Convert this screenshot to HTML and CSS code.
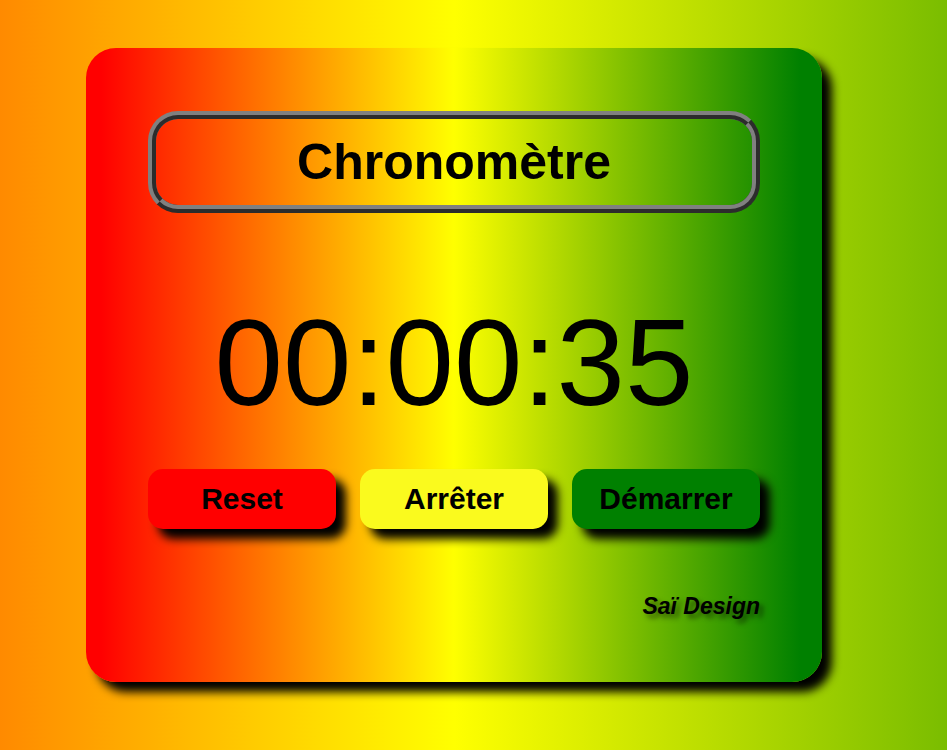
FILE: index.html
```html
<!DOCTYPE html>
<html lang="fr">
<head>
<meta charset="utf-8">
<title>Chronomètre</title>
<link rel="stylesheet" href="styles.css">
</head>
<body>
<main class="card">
  <h1 class="title">Chronomètre</h1>
  <div class="timer">00:00:35</div>
  <div class="buttons">
    <button class="btn btn-reset">Reset</button>
    <button class="btn btn-stop">Arrêter</button>
    <button class="btn btn-start">Démarrer</button>
  </div>
  <p class="signature">Saï Design</p>
</main>
</body>
</html>
```
FILE: styles.css
```css
html, body {
  margin: 0;
  padding: 0;
}
body {
  min-height: 100vh;
  background: linear-gradient(to right, #ff8a00 0%, #ffff00 48%, #7abd00 100%);
  font-family: "Liberation Sans", Arial, sans-serif;
  overflow: hidden;
}
.card {
  box-sizing: border-box;
  width: 736px;
  margin: 48px 0 0 86px;
  padding: 63px 62px 63px;
  border-radius: 30px;
  background: linear-gradient(to right, #ff0000 2%, #ffff00 50%, #008000 97%);
  box-shadow: 10px 10px 10px #000;
  display: flex;
  flex-direction: column;
}
.title {
  box-sizing: border-box;
  height: 102px;
  margin: 0;
  border: 8px ridge #808080;
  border-radius: 30px;
  display: flex;
  align-items: center;
  justify-content: center;
  font-size: 50px;
  font-weight: bold;
  color: #000;
}
.timer {
  margin-top: 88px;
  height: 123px;
  font-size: 123px;
  line-height: 1;
  text-align: center;
  color: #000;
}
.buttons {
  margin-top: 45px;
  display: flex;
  gap: 24px;
}
.btn {
  width: 188px;
  height: 60px;
  border: none;
  border-radius: 15px;
  box-shadow: 10px 10px 10px #000;
  font-family: "Liberation Sans", Arial, sans-serif;
  font-size: 30px;
  font-weight: bold;
  color: #000;
  padding: 0;
}
.btn-reset { background: #ff0000; }
.btn-stop { background: #fafa1e; }
.btn-start { background: #008000; }
.signature {
  margin: 64px 0 0;
  height: 26px;
  line-height: 26px;
  text-align: right;
  font-size: 23px;
  font-weight: bold;
  font-style: italic;
  color: #000;
  text-shadow: 4px 4px 5px rgba(0, 0, 0, 0.5);
}
```
